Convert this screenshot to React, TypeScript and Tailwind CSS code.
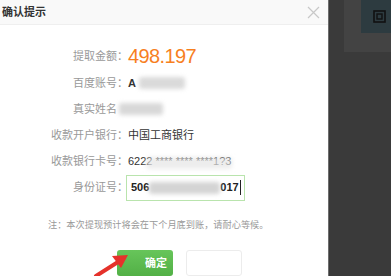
import type { ReactNode } from 'react';

function Row({ label, children, className }: { label: ReactNode; children?: ReactNode; className: string }) {
  return (
    <div className={`flex items-center ${className}`}>
      <div className="w-[128px] shrink-0 text-right text-[#999]">{label}</div>
      <div className="flex items-center text-[#333]">{children}</div>
    </div>
  );
}

function Smudge({ className }: { className: string }) {
  return <span className={`inline-block rounded-[3px] blur-[2px] ${className}`} />;
}

export default function App() {
  return (
    <div className="flex h-[276px] w-[391px] overflow-hidden font-['Liberation_Sans','Noto_Sans_CJK_SC',sans-serif] text-[11px]">
      {/* dialog */}
      <div className="relative flex w-[328px] shrink-0 flex-col bg-white">
        <div className="flex h-[29px] items-center justify-between border-b border-[#efefef] bg-[#f9f9f9] pl-[2px] pr-[8px]">
          <span className="font-bold text-[#333]">确认提示</span>
          <svg width="13" height="13" viewBox="0 0 13 13" className="text-[#c8c8c8]">
            <path d="M1 1 L12 12 M12 1 L1 12" stroke="currentColor" strokeWidth="1.2" fill="none" />
          </svg>
        </div>

        <div className="pt-[17px]">
          <Row label="提取金额：" className="h-[28px]">
            <span className="font-['Liberation_Sans',sans-serif] text-[20px] tracking-[-0.6px] text-[#f7801f]">498.197</span>
          </Row>
          <Row label="百度账号：" className="h-[26px]">
            <span className="font-bold">A</span>
            <Smudge className="ml-[3px] h-[12px] w-[46px] bg-[#dadada]" />
          </Row>
          <Row
            label={
              <>
                真实姓名<span className="inline-block w-[11px]" />
              </>
            }
            className="h-[26px]"
          >
            <Smudge className="-ml-[9px] h-[12px] w-[44px] bg-[#d8d8d8]" />
          </Row>
          <Row label="收款开户银行：" className="h-[26px]">
            <span>中国工商银行</span>
          </Row>
          <Row label="收款银行卡号：" className="h-[26px]">
            <span className="relative whitespace-nowrap">
              6222 **** **** ****1?3
              <Smudge className="absolute left-[18px] top-[4px] h-[12px] w-[86px] bg-[#e6e6e6]/70" />
            </span>
          </Row>
          <Row label="身份证号：" className="h-[27px]">
            <div className="-ml-[2px] flex h-[26px] w-[119px] items-center border border-[#b9e4ad] pl-[4px] font-bold text-[#222]">
              <span>506</span>
              <Smudge className="h-[12px] w-[71px] bg-[#d4d4d4]" />
              <span>017</span>
              <span className="ml-[1px] h-[15px] w-px bg-[#222]" />
            </div>
          </Row>
        </div>

        <div className="mt-[16px] pl-[48px] text-[9.2px] leading-[16px] text-[#999]">
          注：本次提现预计将会在下个月底到账，请耐心等候。
        </div>

        <div className="mt-[17px] flex gap-[13px] pl-[117px]">
          <button className="flex h-[26px] w-[56px] items-center justify-end rounded-[3px] bg-gradient-to-b from-[#67c55a] to-[#52b046] pr-[6px] text-[11px] font-bold text-white">
            确定
          </button>
          <button className="h-[26px] w-[56px] rounded-[3px] border border-[#ececec] bg-white" />
        </div>

        {/* annotation arrow */}
        <svg className="absolute left-[90px] top-[250px]" width="44" height="26" viewBox="0 0 44 26">
          <path d="M6 26 L28 12" stroke="#e5322b" strokeWidth="4" strokeLinecap="round" />
          <path d="M38 5 L22 6 L31 18 Z" fill="#e5322b" />
        </svg>
      </div>

      {/* dark backdrop */}
      <div className="flex flex-1 flex-col border-l border-[#6e6e6e] bg-[#3a3a3a]">
        <div className="ml-auto h-[52px] w-[47px] bg-[#434343]">
          <div className="ml-auto flex h-[33px] w-[30px] items-center bg-[#2d3b40] pl-[12px]">
            <svg width="13" height="13" viewBox="0 0 13 13">
              <rect x="1" y="1" width="11" height="11" stroke="#111" strokeWidth="1.6" fill="none" />
              <rect x="4" y="4" width="5" height="5" stroke="#111" strokeWidth="1.4" fill="none" />
            </svg>
          </div>
        </div>
      </div>
    </div>
  );
}
